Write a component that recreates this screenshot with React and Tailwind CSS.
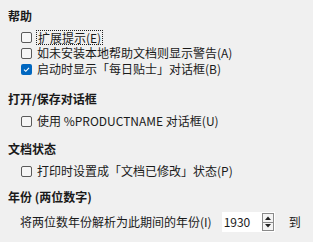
import React from "react";

const font = { fontFamily: '"Noto Sans CJK SC", "Noto Sans", sans-serif' };

const Box = ({ checked }) =>
  checked ? (
    <span className="flex h-[11px] w-[11px] shrink-0 items-center justify-center rounded-[2px] bg-[#0067c0]">
      <svg width="9" height="9" viewBox="0 0 9 9">
        <path d="M2 4.6 L3.8 6.3 L7 2.8" fill="none" stroke="#fff" strokeWidth="1.1" />
      </svg>
    </span>
  ) : (
    <span className="h-[11px] w-[11px] shrink-0 rounded-[2px] border border-[#5a5a5a] bg-[#f6f6f6]" />
  );

const Check = ({ label, checked, focus }) => (
  <div className="flex h-4 items-center pl-[21px]">
    <Box checked={checked} />
    <span
      className={
        focus
          ? "ml-[4px] border border-dotted border-[#222] px-[1px] leading-[13px]"
          : "ml-[5px] leading-4"
      }
    >
      {label}
    </span>
  </div>
);

const Heading = ({ children, className }) => (
  <div className={"flex h-4 items-center pl-2 font-bold " + className}>{children}</div>
);

export default function App() {
  return (
    <div
      className="h-[242px] w-[313px] overflow-hidden bg-[#f0f0f0] pt-2 text-[12px] text-[#1a1a1a]"
      style={font}
    >
      <Heading>帮助</Heading>
      <div className="mt-[5px] flex flex-col">
        <Check label="扩展提示(E)" focus />
        <Check label="如未安装本地帮助文档则显示警告(A)" />
        <Check label="启动时显示「每日贴士」对话框(B)" checked />
      </div>

      <Heading className="mt-[14px]">打开/保存对话框</Heading>
      <div className="mt-[6px]">
        <Check label="使用 %PRODUCTNAME 对话框(U)" />
      </div>

      <Heading className="mt-3">文档状态</Heading>
      <div className="mt-[6px]">
        <Check label="打印时设置成「文档已修改」状态(P)" />
      </div>

      <Heading className="mt-[10px]">年份 (两位数字)</Heading>
      <div className="mt-[7px] flex h-5 items-center pl-5">
        <span>将两位数年份解析为此期间的年份(I)</span>
        <div className="ml-[10px] flex h-5 w-[53px] items-stretch bg-white">
          <span className="flex flex-1 items-center pl-[2px]">1930</span>
          <div className="my-[1px] mr-[1px] flex w-[12px] flex-col border border-[#8a8a8a] bg-[#f4f4f4]">
            <div className="flex flex-1 items-center justify-center border-b border-[#8a8a8a]">
              <svg width="6" height="4" viewBox="0 0 6 4">
                <path d="M0 4 L3 0.5 L6 4 Z" fill="#222" />
              </svg>
            </div>
            <div className="flex flex-1 items-center justify-center">
              <svg width="6" height="4" viewBox="0 0 6 4">
                <path d="M0 0 L3 3.5 L6 0 Z" fill="#222" />
              </svg>
            </div>
          </div>
        </div>
        <span className="ml-[14px]">到</span>
      </div>
    </div>
  );
}
